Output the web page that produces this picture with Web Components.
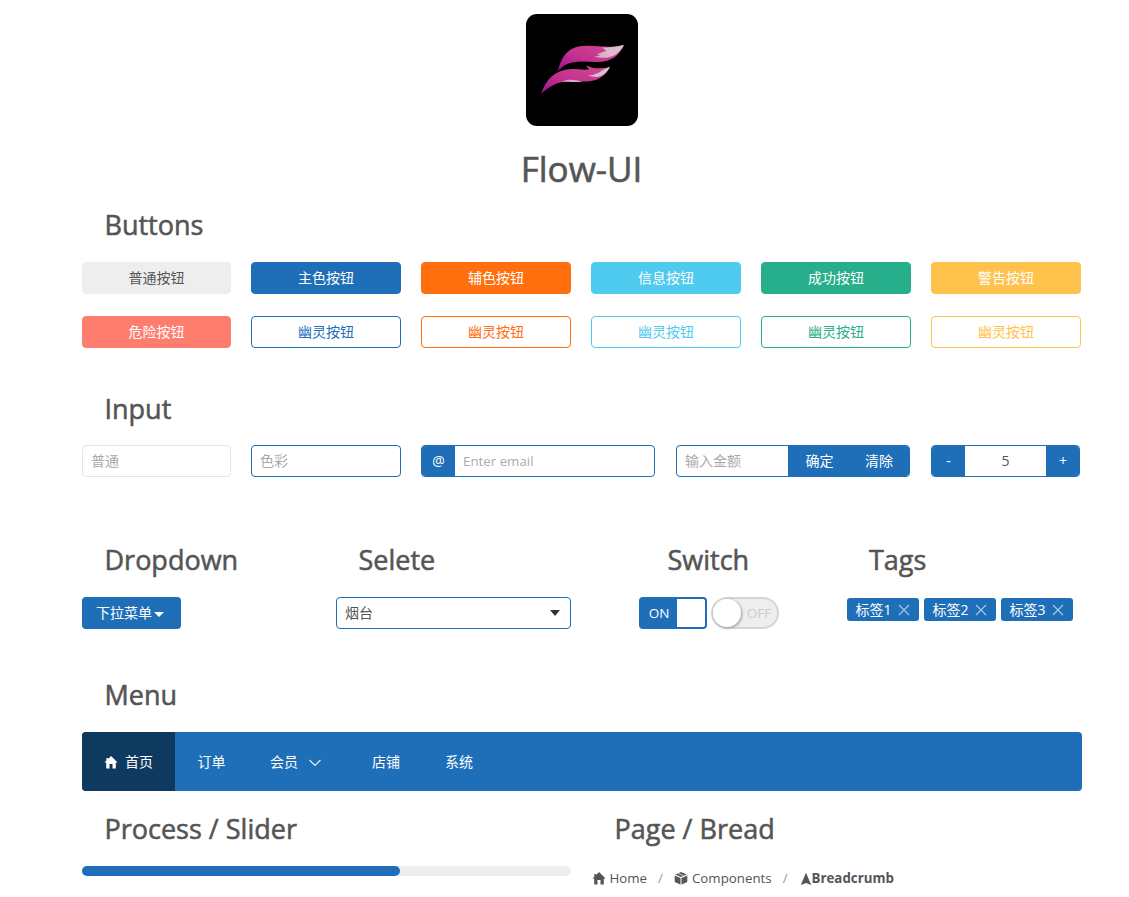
<!DOCTYPE html>
<html lang="zh-CN">
<head>
<meta charset="utf-8">
<title>Flow-UI</title>
<style>
html,body{margin:0;background:#fff;overflow:hidden}
body{height:897px;color:#555;font:14px/20px "Open Sans","Noto Sans CJK SC",sans-serif}
</style>
</head>
<body>
<flow-page></flow-page>
<script>
const define=(name,css,html,setup)=>{
  const t=document.createElement('template');
  t.innerHTML=`<style>*{box-sizing:border-box}:host{box-sizing:border-box}${css}</style>${html}`;
  customElements.define(name,class extends HTMLElement{
    constructor(){super();this.attachShadow({mode:'open'}).append(t.content.cloneNode(true));}
    connectedCallback(){if(setup)setup(this,this.shadowRoot);}
  });
};
const HOME='<svg viewBox="0 0 14 14"><path fill="currentColor" d="M7 1 L13.6 7.6 H11.8 V13.4 H8.5 V9 H5.5 V13.4 H2.2 V7.6 H.4 L2.4 5.6 V3 H4 V4Z"/></svg>';
const BOX='<svg viewBox="0 0 14 14"><path fill="currentColor" d="M7 1 L12.7 3.4 L7 6 L1.3 3.4Z M.7 4.5 L6.5 7.1 V13.6 L.7 10.9Z M13.3 4.5 L7.5 7.1 V13.6 L13.3 10.9Z"/><path stroke="#fff" stroke-width=".7" fill="none" d="M3.8 2.1 L9.7 4.8"/></svg>';
const NAV='<svg viewBox="0 0 12 14"><path fill="currentColor" d="M6 1.8 L11.2 14 L6 12 L.8 14Z"/></svg>';

define('flow-icon',':host{display:inline-flex;width:14px;height:14px;flex:none}span{display:flex;width:100%}svg{width:100%;height:100%}','<span></span>',
  (el,r)=>{r.querySelector('span').innerHTML={home:HOME,box:BOX,nav:NAV}[el.getAttribute('name')];});
define('flow-logo',':host{display:block;width:112px;height:112px}svg{display:block}',`
<svg width="112" height="112" viewBox="0 0 112 112"><defs>
<linearGradient id="a" x1="0" y1="1" x2="1" y2="0"><stop offset="0" stop-color="#a00f90"/><stop offset=".45" stop-color="#c43390"/><stop offset="1" stop-color="#d04a90"/></linearGradient>
<linearGradient id="b" x1="0" x2="1"><stop offset="0" stop-color="#dfa0c4"/><stop offset=".5" stop-color="#dcb8cc"/><stop offset="1" stop-color="#d3c5cf"/></linearGradient></defs>
<rect width="112" height="112" rx="11"/>
<path fill="url(#a)" d="M32 57 C35 44 41 33 57 32 C70 31 82 35 98 31 C93 42 85 48 71 48 C54 47 41 46 32 57Z"/>
<path fill="url(#b)" d="M75 33.4 C83 33.8 90 33 98 31 C92 42 83 46 68 42.8 L74 41.5 L71 40 L80 37 C79 35 77 34 75 33.4Z"/>
<path fill="url(#a)" d="M15 80 C20 65 29 56 45 55 C52 55 57 56 63 55.5 L60 51.5 C68 55 76 55 84 53 C79 63 70 68 58 67.5 C41 65 27 68 15 80Z"/>
<path fill="url(#b)" d="M84 53 C78 63 72 65 62 61 L69 61 L67 60 C75 60 75 55 84 53Z M35 68 C43 64 49 66 57 67.5 C47 69 43 67 35 68Z"/>
</svg>`);
define('flow-heading',':host{display:block;height:74px;padding-left:22.5px;font-size:27px;line-height:74px;font-weight:500;-webkit-text-stroke:.55px #555;white-space:nowrap}','<slot></slot>');
define('flow-button',`:host{display:flex;align-items:center;justify-content:center;height:32px;border-radius:4px;border:1px solid var(--c,#1e6fb8);background:var(--c,#1e6fb8);color:#fff}
:host([ghost]){background:#fff;color:var(--c)}:host([plain]){color:#555}`,'<slot></slot>');
define('flow-input',`:host{display:flex;height:32px;border:1px solid var(--c,#1e6fb8);border-radius:4px;overflow:hidden;line-height:30px;color:#aaa;min-width:0;background:linear-gradient(#fff,#fff)}
.t{flex:1;min-width:0;padding:0 8px}:host([count]) .t{text-align:center;color:#555}`,'<slot name="before"></slot><div class="t"><slot></slot></div><slot name="after"></slot>');
define('flow-addon',':host{display:block;background:#1e6fb8;color:#fff;text-align:center;width:33px;flex:none}','<slot></slot>');
define('flow-dropdown',':host{display:flex;align-items:center;width:99px;height:32px;padding-left:14px;background:#1e6fb8;color:#fff;border-radius:4px}i{margin:3px 0 0 2px;border:5px solid transparent;border-top-color:#fff;border-bottom:0}','<slot></slot><i></i>');
define('flow-select',':host{display:flex;align-items:center;width:235px;height:32px;padding:0 10px 0 8px;border:1px solid #1e6fb8;border-radius:4px;justify-content:space-between}i{border:5.5px solid transparent;border-top:6px solid #333;border-bottom:0}','<slot></slot><i></i>');
define('flow-switch',`:host{display:flex;align-items:center;width:68px;height:32px;font-size:13.5px}
:host([on]){border:2px solid #1e6fb8;border-radius:4px;background:#1e6fb8;color:#fff}
:host(:not([on])){border:2px solid #d5d5d5;border-radius:16px;background:#eee;color:#ccc}
b{width:28px;height:28px;background:#fff;flex:none}span{flex:1;text-align:center}
:host([on]) b{order:2;border-radius:0 2px 2px 0}:host(:not([on])) b{border-radius:50%;box-shadow:1px 1px 3px #999}`,'<b></b><span><slot></slot></span>');
define('flow-tag',':host{display:flex;align-items:center;justify-content:space-between;width:72px;height:23px;padding:0 9px 0 8.5px;background:#1e6fb8;color:#fff;border-radius:3px}svg{display:block}','<span><slot></slot></span><svg width="12" height="12"><path d="M1 1L11 11M11 1L1 11" stroke="#a9cbea" stroke-width="1.1"/></svg>');
define('flow-menu',':host{display:flex;height:59px;background:#1e6fb8;border-radius:4px;overflow:hidden;color:#fff}','<slot></slot>');
define('flow-menu-item',':host{display:flex;align-items:center;padding:0 22.5px}:host([active]){width:93px;padding:0 0 0 22px;background:#0f3a5f}svg{margin:2px 0 0 10.5px}:host(:not([sub])) svg{display:none}','<slot></slot><svg width="12" height="12"><path d="M.5 3L6 8.5L11.5 3" fill="none" stroke="#e4eef7" stroke-width="1.2"/></svg>');
define('flow-progress',':host{display:block;height:10px;background:#eee;border-radius:5px}div{width:65%;height:10px;border-radius:5px;background:#1e6fb8}','<div></div>');
define('flow-crumbs',':host{display:flex;align-items:center;height:24px;white-space:nowrap;font-size:13.3px}','<slot></slot>');

const hues=['#eee','#1e6fb8','#ff6f0e','#50cbf0','#27ae8a','#ffc24c'];
const names=['普通','主色','辅色','信息','成功','警告'];
define('flow-page',`
:host{display:block;padding:14px 0 0 82px}
main{width:1000px}
header{display:flex;flex-direction:column;align-items:center;height:174px}
h1{margin:25px 1px 0 0;font-size:35px;line-height:36px;font-weight:500;-webkit-text-stroke:.6px #555}
.grid{display:grid;grid-template-columns:149px repeat(5,150px);gap:22px 20px}
.inputs{display:grid;grid-template-columns:149px 20px 150px 20px 234px 21px 234px 21px 149px;margin-bottom:46px}
.inputs>:nth-child(1){grid-column:1}.inputs>:nth-child(2){grid-column:3}.inputs>:nth-child(3){grid-column:5}.inputs>:nth-child(4){grid-column:7}.inputs>:nth-child(5){grid-column:9}
.buttons{margin-bottom:23px}
.row{display:grid;grid-template-columns:254px 303px 208px 1fr;height:135px}
.sw,.tags{display:flex;gap:4px}.tags{gap:5px;padding-top:1px}
.menu{margin-bottom:1px}
.bottom{display:grid;grid-template-columns:489px 1fr;gap:21px}
.w60{width:60px}.home{margin-right:7px}.sep{color:#999;margin:0 11px}
`,`<main>
<header><flow-logo></flow-logo><h1>Flow-UI</h1></header>
<flow-heading>Buttons</flow-heading>
<div class="grid buttons">
${names.map((n,i)=>`<flow-button ${i?'':'plain'} style="--c:${hues[i]}">${n}按钮</flow-button>`).join('')}
<flow-button style="--c:#ff7d6e">危险按钮</flow-button>
${hues.slice(1).map(c=>`<flow-button ghost style="--c:${c}">幽灵按钮</flow-button>`).join('')}
</div>
<flow-heading style="line-height:76px">Input</flow-heading>
<div class="inputs">
<flow-input style="--c:#e6e6e6">普通</flow-input><flow-input>色彩</flow-input>
<flow-input><flow-addon slot="before">@</flow-addon><span style="font-size:13.3px">Enter email</span></flow-input>
<flow-input>输入金额<flow-addon class="w60" slot="after" style="padding-left:3px">确定</flow-addon><flow-addon class="w60" slot="after" style="width:61px;padding-left:1px">清除</flow-addon></flow-input>
<flow-input count><flow-addon slot="before">-</flow-addon>5<flow-addon slot="after" style="padding-left:1px">+</flow-addon></flow-input>
</div>
<div class="row">
<section><flow-heading>Dropdown</flow-heading><flow-dropdown>下拉菜单</flow-dropdown></section>
<section><flow-heading>Selete</flow-heading><flow-select>烟台</flow-select></section>
<section><flow-heading style="padding-left:28.5px">Switch</flow-heading><div class="sw"><flow-switch on>ON</flow-switch><flow-switch>OFF</flow-switch></div></section>
<section><flow-heading style="padding-left:22px">Tags</flow-heading><div class="tags"><flow-tag>标签1</flow-tag><flow-tag>标签2</flow-tag><flow-tag>标签3</flow-tag></div></section>
</div>
<flow-heading>Menu</flow-heading>
<flow-menu class="menu"><flow-menu-item active><flow-icon class="home" name="home"></flow-icon>首页</flow-menu-item><flow-menu-item>订单</flow-menu-item><flow-menu-item sub style="padding-left:22px">会员</flow-menu-item><flow-menu-item style="padding-left:29px">店铺</flow-menu-item><flow-menu-item>系统</flow-menu-item></flow-menu>
<div class="bottom">
<section><flow-heading>Process / Slider</flow-heading><flow-progress></flow-progress></section>
<section><flow-heading>Page / Bread</flow-heading><flow-crumbs><flow-icon name="home" style="margin:0 4px 0 -.5px"></flow-icon>Home<span class="sep">/</span><flow-icon name="box" style="margin-right:4px"></flow-icon>Components<span class="sep">/</span><flow-icon name="nav" style="width:12px;margin-left:1px"></flow-icon><b>Breadcrumb</b></flow-crumbs></section>
</div>
</main>`);
</script>
</body>
</html>
